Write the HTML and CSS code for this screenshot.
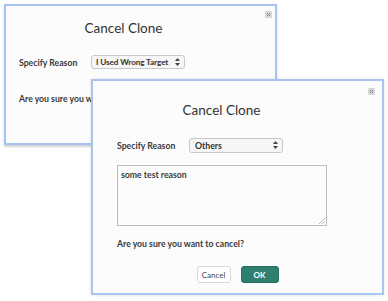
FILE: index.html
```html
<!DOCTYPE html>
<html lang="en">
<head>
	<meta charset="UTF-8" />
	<title>Cancel Clone</title>
	<link rel="stylesheet" href="styles.css">
</head>
<body>
	<div class="stage">
		<!-- back dialog -->
		<div class="dialog dialog-back">
			<span class="close"><svg width="7" height="7" viewBox="0 0 7 7"><rect x="0" y="0" width="7" height="7" rx="1" fill="#d6d6d6"/><path d="M2 2 L5 5 M5 2 L2 5" stroke="#888" stroke-width="1"/></svg></span>
			<h2 class="title">Cancel Clone</h2>
			<div class="row">
				<label>Specify Reason</label>
				<div class="select sel-back">I Used Wrong Target
					<svg class="arrows" width="5" height="8" viewBox="0 0 5 8"><path d="M0 3 L2.5 0 L5 3 Z M0 5 L2.5 8 L5 5 Z" fill="#444"/></svg>
				</div>
			</div>
			<p class="confirm">Are you sure you want to cancel?</p>
		</div>

		<!-- front dialog -->
		<div class="dialog dialog-front">
			<span class="close"><svg width="7" height="7" viewBox="0 0 7 7"><rect x="0" y="0" width="7" height="7" rx="1" fill="#d6d6d6"/><path d="M2 2 L5 5 M5 2 L2 5" stroke="#888" stroke-width="1"/></svg></span>
			<h2 class="title">Cancel Clone</h2>
			<div class="row">
				<label>Specify Reason</label>
				<div class="select sel-front">Others
					<svg class="arrows" width="5" height="8" viewBox="0 0 5 8"><path d="M0 3 L2.5 0 L5 3 Z M0 5 L2.5 8 L5 5 Z" fill="#444"/></svg>
				</div>
			</div>
			<div class="reason">some test reason
				<svg class="grip" width="6" height="6" viewBox="0 0 6 6"><path d="M6 0 L0 6 M6 3 L3 6" stroke="#aaa" stroke-width="0.8"/></svg>
			</div>
			<p class="confirm">Are you sure you want to cancel?</p>
			<div class="actions">
				<button class="btn btn-cancel">Cancel</button>
				<button class="btn btn-ok">OK</button>
			</div>
		</div>
	</div>
</body>
</html>
```

FILE: styles.css
```css
body {
	margin: 0;
	background: #fff;
	font-family: Lato, "Open Sans", sans-serif;
	color: #2f2f2f;
}
.stage {
	position: relative;
	width: 388px;
	height: 301px;
	overflow: hidden;
}
.dialog {
	position: absolute;
	box-sizing: border-box;
	background: #fcfcfc;
	border: 2px solid #a8c4f0;
	overflow: hidden;
}
.dialog-back {
	left: 4px;
	top: 4px;
	width: 273px;
	height: 141px;
	padding: 0 13px;
	box-shadow: 0 2px 2px rgba(0, 0, 0, 0.18);
}
.dialog-front {
	left: 91px;
	top: 79px;
	width: 293px;
	height: 216px;
	padding: 0 24px;
	box-shadow: 0 0 3px rgba(0, 0, 0, 0.12);
}
.close {
	position: absolute;
	line-height: 0;
}
.dialog-back .close {
	right: 3px;
	top: 5px;
}
.dialog-front .close {
	right: 7px;
	top: 7px;
}
.title {
	margin: 0;
	font-size: 13.5px;
	font-weight: normal;
	text-align: center;
	color: #333;
}
.dialog-back .title {
	padding: 14px 34px 0 0;
}
.dialog-front .title {
	padding: 21px 32px 0 0;
}
.row {
	display: flex;
	align-items: center;
	font-size: 8.7px;
	font-weight: bold;
	color: #3a3a3a;
}
.dialog-back .row {
	margin-top: 19px;
}
.dialog-front .row {
	margin-top: 20px;
}
.row label {
	width: 72px;
}
.select {
	position: relative;
	box-sizing: border-box;
	height: 14px;
	line-height: 12px;
	padding-left: 5px;
	font-size: 8.7px;
	font-weight: bold;
	color: #333;
	background: #f6f6f6;
	border: 1px solid #c8c8c8;
	border-radius: 3px;
}
.sel-back {
	width: 94px;
	padding-left: 4px;
	font-size: 8.2px;
	letter-spacing: -0.1px;
}
.sel-front {
	width: 94px;
	height: 15px;
	line-height: 13px;
}
.arrows {
	position: absolute;
	right: 4px;
	top: 2px;
}
.reason {
	position: relative;
	box-sizing: border-box;
	width: 210px;
	height: 61px;
	margin-top: 12px;
	padding: 3px 3px;
	font-size: 8.7px;
	font-weight: bold;
	color: #3a3a3a;
	background: #fcfcfc;
	border: 1px solid #bcbcbc;
}
.grip {
	position: absolute;
	right: 1px;
	bottom: 1px;
}
.confirm {
	margin: 0;
	font-size: 8.7px;
	font-weight: bold;
	color: #3a3a3a;
	white-space: nowrap;
}
.dialog-back .confirm {
	margin-top: 24px;
}
.dialog-front .confirm {
	margin-top: 12px;
}
.actions {
	display: flex;
	justify-content: center;
	gap: 10px;
	margin-top: 17px;
}
.btn {
	box-sizing: border-box;
	height: 17px;
	font-family: inherit;
	font-size: 8px;
	border-radius: 3px;
	padding: 0;
}
.btn-cancel {
	width: 34px;
	background: #fff;
	color: #444;
	border: 1px solid #d8d8d8;
}
.btn-ok {
	width: 38px;
	background: #2e7f70;
	color: #fff;
	font-weight: bold;
	border: 1px solid #276d60;
}
```
